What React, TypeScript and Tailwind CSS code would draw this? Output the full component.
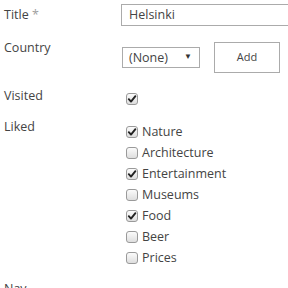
import React from "react";

function Box({ checked }: { checked?: boolean }) {
  return (
    <span className="w-[12px] h-[12px] shrink-0 rounded-[3px] border border-[#9a9a9a] bg-gradient-to-b from-[#fbfbfb] to-[#dedede] flex items-center justify-center">
      {checked && (
        <svg width="10" height="10" viewBox="0 0 10 10">
          <path d="M1.8 5.2 L4 7.6 L8.4 2.2" fill="none" stroke="#222" strokeWidth="1.9" strokeLinecap="round" strokeLinejoin="round" />
        </svg>
      )}
    </span>
  );
}

const items: [string, boolean][] = [
  ["Nature", true],
  ["Architecture", false],
  ["Entertainment", true],
  ["Museums", false],
  ["Food", true],
  ["Beer", false],
  ["Prices", false],
];

export default function App() {
  return (
    <div
      className="w-[288px] h-[288px] overflow-hidden bg-white text-[#444] text-[12.5px]"
      style={{ fontFamily: '"Open Sans", "Noto Sans", sans-serif' }}
    >
      <div className="flex pt-[4px]">
        <div className="w-[121px] shrink-0 pl-[4px] leading-[22px]">
          Title <span className="text-[#a0a0a0]">*</span>
        </div>
        <div className="w-[180px] h-[22px] border border-[#ababab] pl-[7px] leading-[20px] shrink-0">Helsinki</div>
      </div>

      <div className="flex mt-[12px]">
        <div className="w-[122px] shrink-0 pl-[4px] leading-[18px] pt-[1px]">Country</div>
        <div className="mt-[9px] w-[78px] shrink-0 h-[21px] border border-[#ababab] flex items-center justify-between pl-[6px] pr-[7px]">
          <span className="leading-[19px]">(None)</span>
          <span className="text-[8px] text-[#333] -mt-[4px]">▼</span>
        </div>
        <div className="ml-[14px] mt-[4px] w-[66px] shrink-0 h-[31px] border border-[#ababab] flex items-center justify-center text-[11px] text-[#444]">
          Add
        </div>
      </div>

      <div className="flex mt-[14px] items-start">
        <div className="w-[126px] shrink-0 pl-[4px] leading-[18px]">Visited</div>
        <div className="mt-[6px]">
          <Box checked />
        </div>
      </div>

      <div className="flex mt-[13px] items-start">
        <div className="w-[126px] shrink-0 pl-[4px] leading-[18px]">Liked</div>
        <div className="flex flex-col mt-[3px]">
          {items.map(([label, c]) => (
            <div key={label} className="flex items-center h-[21px] gap-[4px]">
              <Box checked={c} />
              <span className="leading-[21px]">{label}</span>
            </div>
          ))}
        </div>
      </div>

      <div className="pl-[4px] mt-[12px] leading-[18px]">Nav</div>
    </div>
  );
}
